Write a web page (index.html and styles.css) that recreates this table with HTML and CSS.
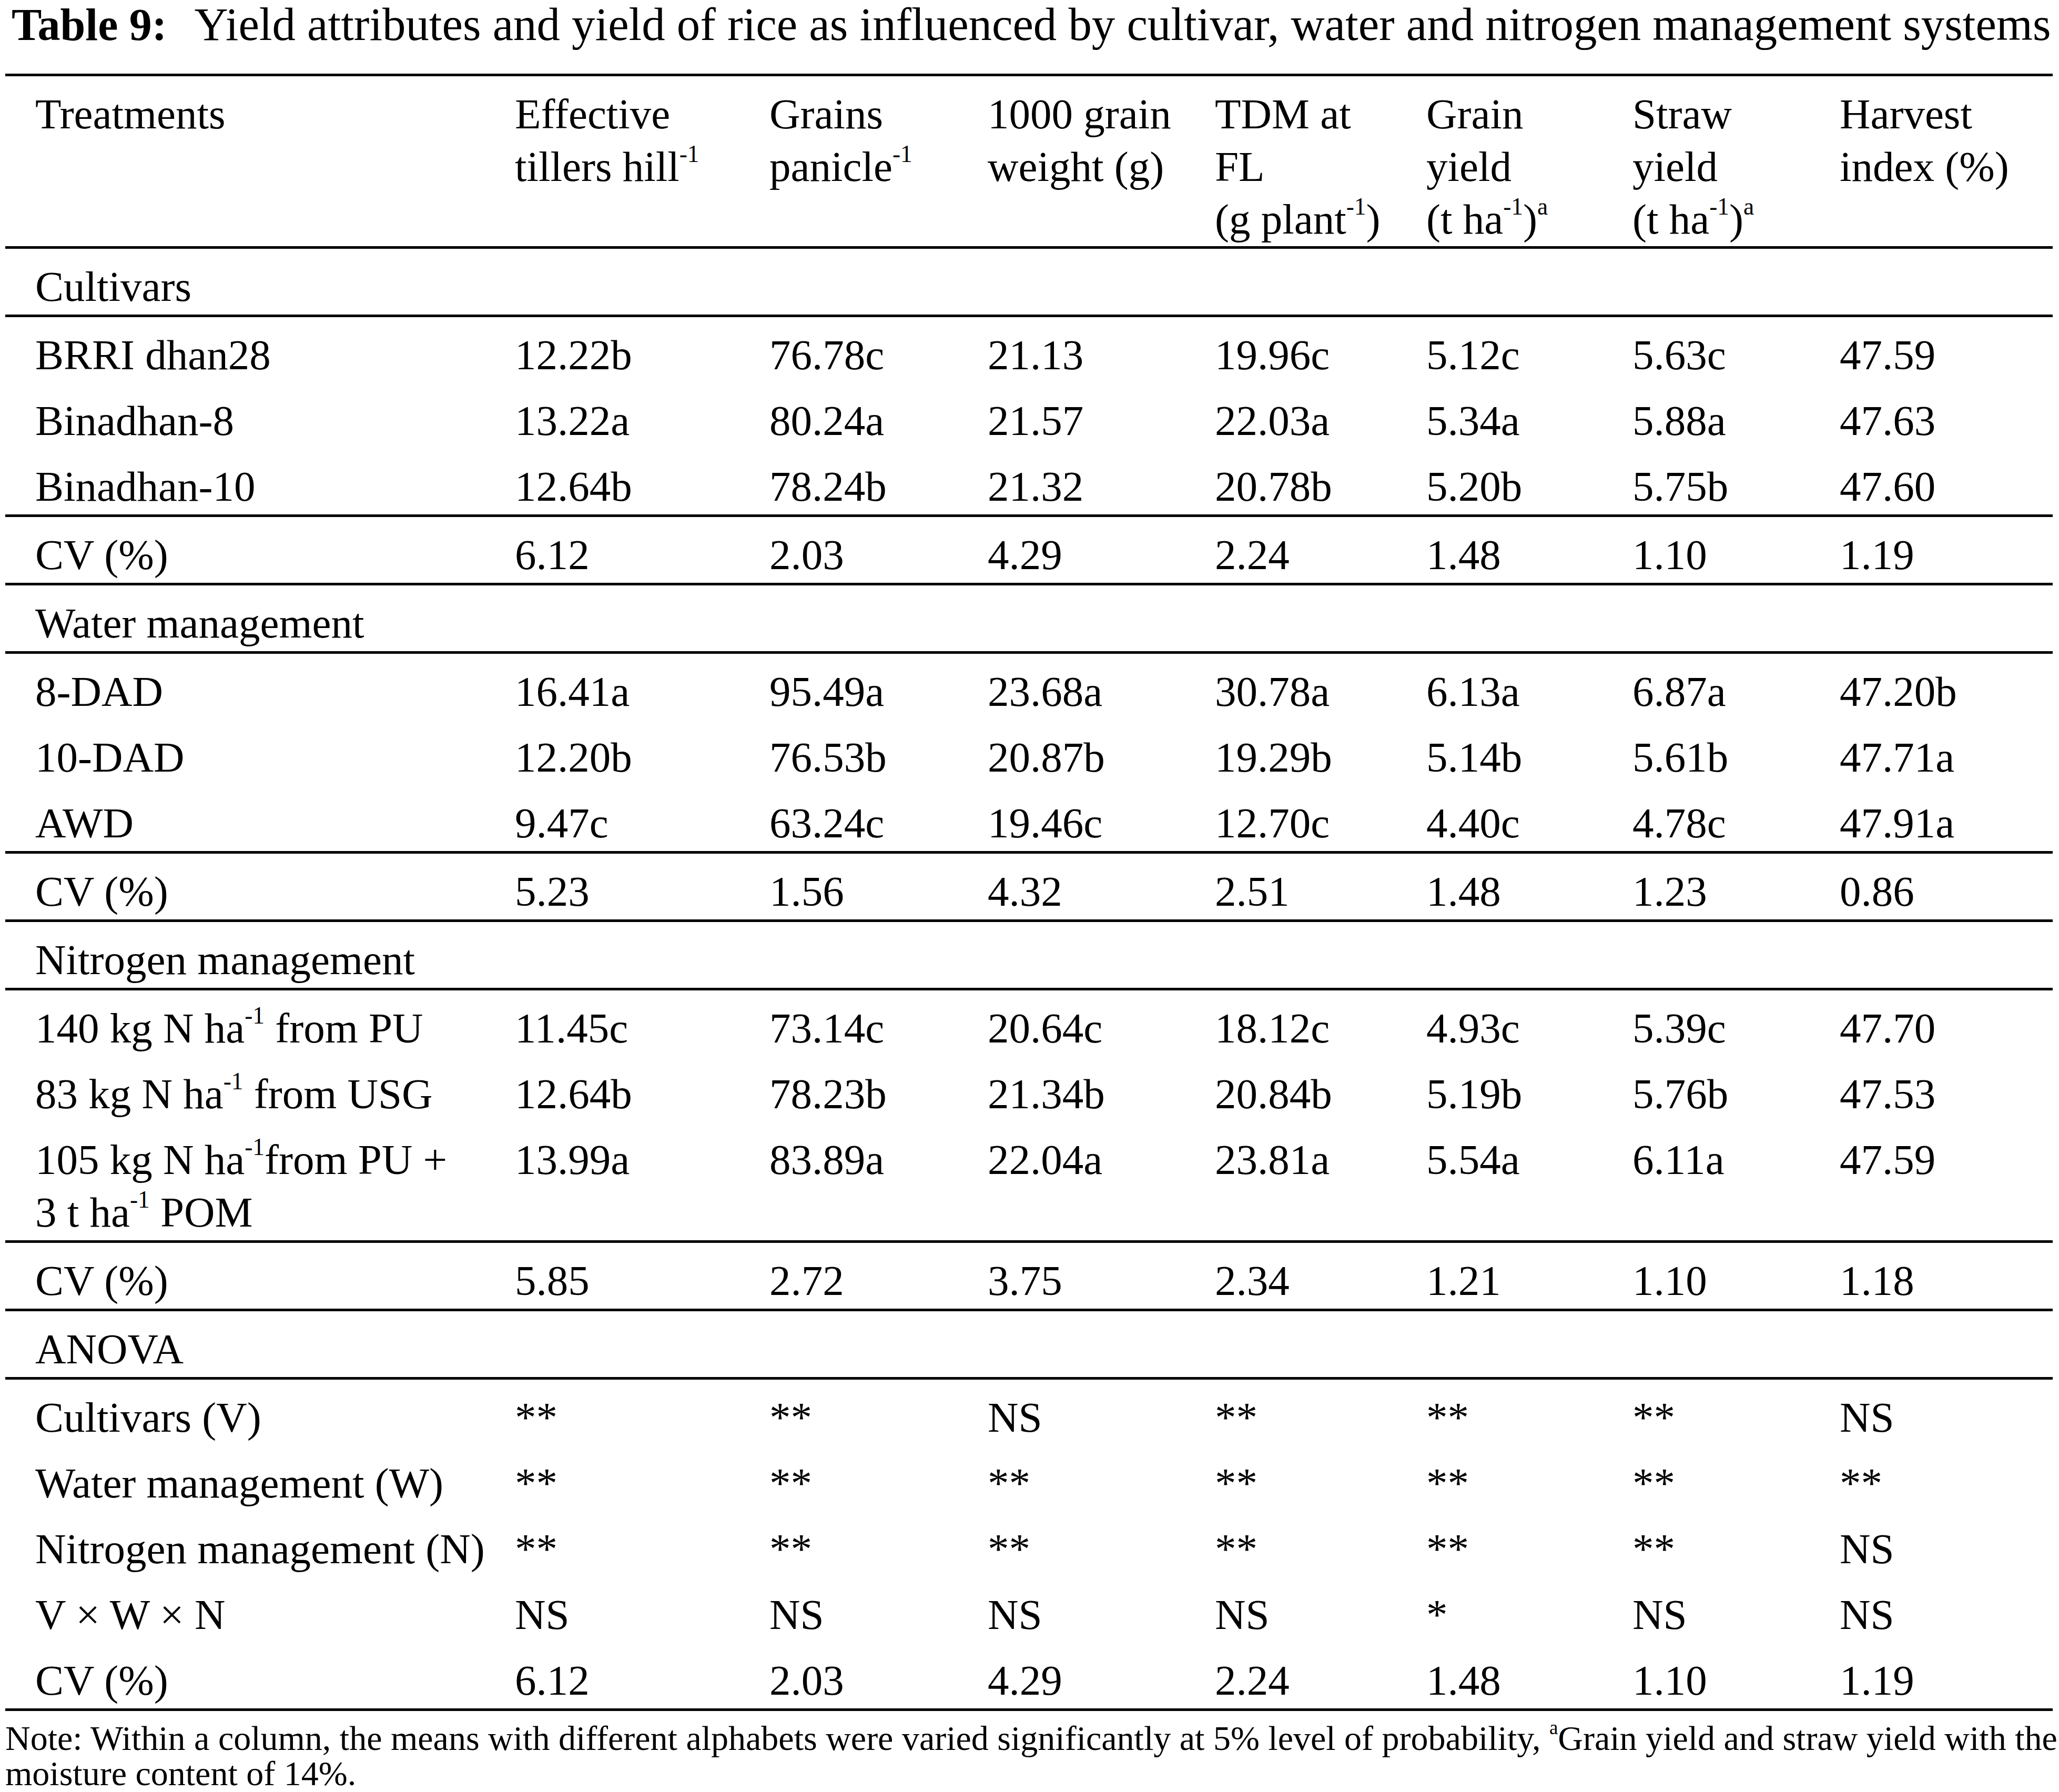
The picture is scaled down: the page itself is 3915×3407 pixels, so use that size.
FILE: index.html
```html
<!DOCTYPE html>
<html lang="en">
<head>
<meta charset="utf-8">
<title>Table 9</title>
<link rel="stylesheet" href="styles.css">
</head>
<body>
<div class="page">
  <h1 class="caption"><span class="label">Table 9:</span>Yield attributes and yield of rice as influenced by cultivar, water and nitrogen management systems</h1>
  <table class="data">
    <colgroup>
      <col class="c1"><col class="c2"><col class="c3"><col class="c4"><col class="c5"><col class="c6"><col class="c7"><col class="c8">
    </colgroup>
    <thead>
      <tr>
        <th>Treatments</th>
        <th>Effective<br>tillers hill<sup>-1</sup></th>
        <th>Grains<br>panicle<sup>-1</sup></th>
        <th>1000 grain<br>weight (g)</th>
        <th>TDM at<br>FL<br>(g plant<sup>-1</sup>)</th>
        <th>Grain<br>yield<br>(t ha<sup>-1</sup>)<sup>a</sup></th>
        <th>Straw<br>yield<br>(t ha<sup>-1</sup>)<sup>a</sup></th>
        <th>Harvest<br>index (%)</th>
      </tr>
    </thead>
    <tbody>
      <tr><td>Cultivars</td><td></td><td></td><td></td><td></td><td></td><td></td><td></td></tr>
      <tr class="rt"><td>BRRI dhan28</td><td>12.22b</td><td>76.78c</td><td>21.13</td><td>19.96c</td><td>5.12c</td><td>5.63c</td><td>47.59</td></tr>
      <tr><td>Binadhan-8</td><td>13.22a</td><td>80.24a</td><td>21.57</td><td>22.03a</td><td>5.34a</td><td>5.88a</td><td>47.63</td></tr>
      <tr><td>Binadhan-10</td><td>12.64b</td><td>78.24b</td><td>21.32</td><td>20.78b</td><td>5.20b</td><td>5.75b</td><td>47.60</td></tr>
      <tr class="rt"><td>CV (%)</td><td>6.12</td><td>2.03</td><td>4.29</td><td>2.24</td><td>1.48</td><td>1.10</td><td>1.19</td></tr>
      <tr class="rt"><td>Water management</td><td></td><td></td><td></td><td></td><td></td><td></td><td></td></tr>
      <tr class="rt"><td>8-DAD</td><td>16.41a</td><td>95.49a</td><td>23.68a</td><td>30.78a</td><td>6.13a</td><td>6.87a</td><td>47.20b</td></tr>
      <tr><td>10-DAD</td><td>12.20b</td><td>76.53b</td><td>20.87b</td><td>19.29b</td><td>5.14b</td><td>5.61b</td><td>47.71a</td></tr>
      <tr><td>AWD</td><td>9.47c</td><td>63.24c</td><td>19.46c</td><td>12.70c</td><td>4.40c</td><td>4.78c</td><td>47.91a</td></tr>
      <tr class="rt"><td>CV (%)</td><td>5.23</td><td>1.56</td><td>4.32</td><td>2.51</td><td>1.48</td><td>1.23</td><td>0.86</td></tr>
      <tr class="rt"><td>Nitrogen management</td><td></td><td></td><td></td><td></td><td></td><td></td><td></td></tr>
      <tr class="rt"><td>140 kg N ha<sup>-1</sup> from PU</td><td>11.45c</td><td>73.14c</td><td>20.64c</td><td>18.12c</td><td>4.93c</td><td>5.39c</td><td>47.70</td></tr>
      <tr><td>83 kg N ha<sup>-1</sup> from USG</td><td>12.64b</td><td>78.23b</td><td>21.34b</td><td>20.84b</td><td>5.19b</td><td>5.76b</td><td>47.53</td></tr>
      <tr><td>105 kg N ha<sup>-1</sup>from PU +<br>3 t ha<sup>-1</sup> POM</td><td>13.99a</td><td>83.89a</td><td>22.04a</td><td>23.81a</td><td>5.54a</td><td>6.11a</td><td>47.59</td></tr>
      <tr class="rt"><td>CV (%)</td><td>5.85</td><td>2.72</td><td>3.75</td><td>2.34</td><td>1.21</td><td>1.10</td><td>1.18</td></tr>
      <tr class="rt"><td>ANOVA</td><td></td><td></td><td></td><td></td><td></td><td></td><td></td></tr>
      <tr class="rt"><td>Cultivars (V)</td><td>**</td><td>**</td><td>NS</td><td>**</td><td>**</td><td>**</td><td>NS</td></tr>
      <tr><td>Water management (W)</td><td>**</td><td>**</td><td>**</td><td>**</td><td>**</td><td>**</td><td>**</td></tr>
      <tr><td>Nitrogen management (N)</td><td>**</td><td>**</td><td>**</td><td>**</td><td>**</td><td>**</td><td>NS</td></tr>
      <tr><td>V × W × N</td><td>NS</td><td>NS</td><td>NS</td><td>NS</td><td>*</td><td>NS</td><td>NS</td></tr>
      <tr class="rb"><td>CV (%)</td><td>6.12</td><td>2.03</td><td>4.29</td><td>2.24</td><td>1.48</td><td>1.10</td><td>1.19</td></tr>
    </tbody>
  </table>
  <p class="note"><span class="note-line">Note: Within a column, the means with different alphabets were varied significantly at 5% level of probability, <sup>a</sup>Grain yield and straw yield with the</span><span class="note-line last">moisture content of 14%.</span></p>
</div>
</body>
</html>
```

FILE: styles.css
```css
html, body {
  margin: 0;
  padding: 0;
  background: #ffffff;
}

body {
  font-family: "Liberation Serif", "Times New Roman", serif;
  color: #000000;
}

.page {
  width: 3893px;
  padding-left: 10px;
}

.caption {
  margin: 0 0 47px 0;
  padding-left: 12px;
  font-size: 88.8px;
  font-weight: normal;
  line-height: 92px;
  white-space: nowrap;
}

.caption .label {
  font-size: 86px;
  font-weight: bold;
  margin-right: 52px;
}

.data {
  width: 3893px;
  table-layout: fixed;
  border-collapse: separate;
  border-spacing: 0;
  font-size: 81px;
  line-height: 100px;
}

.data col.c1 { width: 969px; }
.data col.c2 { width: 484px; }
.data col.c3 { width: 415px; }
.data col.c4 { width: 432px; }
.data col.c5 { width: 402px; }
.data col.c6 { width: 392px; }
.data col.c7 { width: 394px; }
.data col.c8 { width: 405px; }

.data th,
.data td {
  text-align: left;
  vertical-align: top;
  font-weight: normal;
  padding: 22px 0 3px 0;
  white-space: nowrap;
}

.data th:first-child,
.data td:first-child {
  padding-left: 57px;
}

.data th {
  border-top: 5px solid #000;
  border-bottom: 5px solid #000;
  padding-bottom: 1px;
}

.data tr.rt td {
  border-top: 5px solid #000;
}

.data tr.rb td {
  border-bottom: 5px solid #000;
}

.data sup,
.note sup {
  font-size: 0.56em;
  line-height: 0;
  vertical-align: baseline;
  position: relative;
  top: -0.8em;
}

.note {
  margin: 18px 0 0 0;
  font-size: 66px;
  line-height: 67px;
}

.note-line {
  display: block;
  text-align: justify;
  text-align-last: justify;
  white-space: nowrap;
}

.note-line.last {
  text-align-last: left;
}
```
